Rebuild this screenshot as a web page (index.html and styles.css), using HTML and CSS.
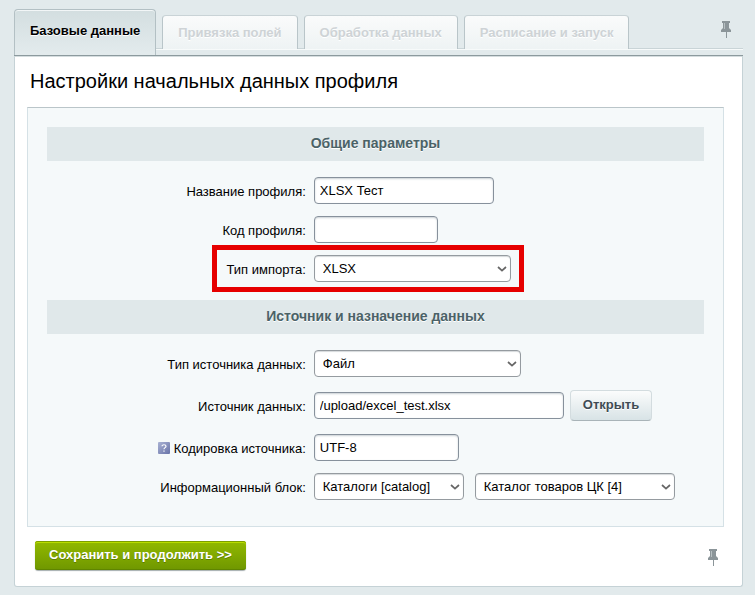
FILE: index.html
```
<!DOCTYPE html>
<html lang="ru">
<head>
  <meta charset="UTF-8" />
  <meta name="viewport" content="width=device-width, initial-scale=1.0"/>
  <title>Настройки начальных данных профиля</title>
  <link rel="stylesheet" href="styles.css">
</head>
<body>
  <div class="tabs">
    <button type="button" class="tab active">Базовые данные</button>
    <button type="button" class="tab" disabled>Привязка полей</button>
    <button type="button" class="tab" disabled>Обработка данных</button>
    <button type="button" class="tab" disabled>Расписание и запуск</button>
    <button type="button" class="pin" aria-label="Закрепить">
      <svg width="10" height="17" viewBox="0 0 10 17">
        <path d="M2 0h7v2H8v5l2 2v2H0V9l2-2V2H1V0z" fill="#8b9599"/>
        <path d="M3 2h1v6H3z" fill="#b7c0c2"/>
        <path d="M5 11h1v6H5z" fill="#8b9599"/>
      </svg>
    </button>
  </div>

  <form class="content">
    <h1>Настройки начальных данных профиля</h1>

    <div class="panel">
      <h2>Общие параметры</h2>
      <div class="rows">
        <div class="row">
          <label for="profileName">Название профиля:</label>
          <div class="field"><input type="text" id="profileName" class="w-name" value="XLSX Тест" /></div>
        </div>
        <div class="row">
          <label for="profileCode">Код профиля:</label>
          <div class="field"><input type="text" id="profileCode" class="w-code" /></div>
        </div>
        <div class="row marked">
          <label for="importType">Тип импорта:</label>
          <div class="field">
            <select id="importType" class="w-type">
              <option>XLSX</option>
            </select>
          </div>
        </div>
      </div>

      <h2>Источник и назначение данных</h2>
      <div class="rows">
        <div class="row">
          <label for="sourceType">Тип источника данных:</label>
          <div class="field">
            <select id="sourceType" class="w-source-type">
              <option>Файл</option>
            </select>
          </div>
        </div>
        <div class="row">
          <label for="source">Источник данных:</label>
          <div class="field">
            <input type="text" id="source" class="w-source" value="/upload/excel_test.xlsx" />
            <button type="button" class="open">Открыть</button>
          </div>
        </div>
        <div class="row">
          <label for="encoding">
            <svg class="hint" width="12" height="12" viewBox="0 0 12 12">
              <defs>
                <linearGradient id="hintFill" x1="0" y1="0" x2="1" y2="1">
                  <stop offset="0" stop-color="#a9b2d3"/>
                  <stop offset="1" stop-color="#6873a8"/>
                </linearGradient>
              </defs>
              <rect width="12" height="12" rx="1" fill="url(#hintFill)"/>
              <path d="M4 4.3C4 2.2 8 2.2 8 4.3 8 5.7 6 5.6 6 7.3M6 8.5v1.2" fill="none" stroke="#fff" stroke-width="1.2"/>
            </svg>
            Кодировка источника:
          </label>
          <div class="field"><input type="text" id="encoding" class="w-encoding" value="UTF-8" /></div>
        </div>
        <div class="row">
          <label for="iblockType">Информационный блок:</label>
          <div class="field pair">
            <select id="iblockType" class="w-iblock-type">
              <option>Каталоги [catalog]</option>
            </select>
            <select id="iblock" class="w-iblock" aria-label="Каталог">
              <option>Каталог товаров ЦК [4]</option>
            </select>
          </div>
        </div>
      </div>
    </div>

    <div class="footer">
      <button type="submit" class="save">Сохранить и продолжить &gt;&gt;</button>
      <button type="button" class="pin" aria-label="Закрепить">
        <svg width="10" height="17" viewBox="0 0 10 17">
          <path d="M2 0h7v2H8v5l2 2v2H0V9l2-2V2H1V0z" fill="#8b9599"/>
          <path d="M3 2h1v6H3z" fill="#b7c0c2"/>
          <path d="M5 11h1v6H5z" fill="#8b9599"/>
        </svg>
      </button>
    </div>
  </form>
</body>
</html>
```
FILE: styles.css
```
*, *::after {
  box-sizing: border-box;
}
body {
  margin: 0;
  padding: 9px 12px 8px 14px;
  background: #e2eaec;
  font-family: "Liberation Sans", Arial, sans-serif;
  font-size: 13px;
  color: #000;
}
button, input, select {
  font-family: inherit;
  font-size: 13px;
  margin: 0;
}
button {
  cursor: pointer;
}

/* tabs */
.tabs {
  display: flex;
  align-items: flex-end;
  gap: 6px;
  height: 47px;
  padding-bottom: 6px;
  border-bottom: 1px solid #8c9a9e;
  background: linear-gradient(#c9d4d7, #c9d4d7) 0 39px / 100% 1px no-repeat,
              linear-gradient(#f7fafa, #f7fafa) 0 40px / 100% 1px no-repeat;
}
.tab {
  height: 34px;
  padding: 0 15px;
  border: 1px solid #b9c5c9;
  border-top-color: #c9d3d6;
  border-bottom: none;
  border-radius: 4px 4px 0 0;
  background: linear-gradient(#fafbfb, #eef3f4);
  color: #ced3d6;
  font-weight: bold;
  text-shadow: 0 1px 0 #fff;
  white-space: nowrap;
}
.tab.active {
  align-self: flex-start;
  flex-shrink: 0;
  height: 46px;
  padding-bottom: 4px;
  border-color: #b3c0c4;
  background: linear-gradient(#d3dee0, #e3ebed);
  box-shadow: inset 0 1px 0 #f2f6f7;
  color: #000;
}
.pin {
  display: flex;
  padding: 0;
  border: none;
  background: none;
}
.tabs .pin {
  margin: 0 12px 11px auto;
}

/* content */
.content {
  padding: 0 18px 16px 12px;
  border: 1px solid #c5d2d6;
  border-top-color: #d5dddf;
  border-radius: 0 0 3px 3px;
  background: #fff;
}
h1 {
  margin: 0;
  padding: 13px 3px 14px;
  font-size: 20px;
  font-weight: normal;
  line-height: 23px;
}
.panel {
  padding: 19px 19px 20px;
  border: 1px solid #d5e1e6;
  border-top-color: #bac5c9;
  background: #f5f9fa;
}
h2 {
  margin: 0;
  padding-bottom: 2px;
  background: #e0e8ea;
  color: #4b6267;
  font-size: 14px;
  line-height: 32px;
  text-align: center;
  text-shadow: 0 1px 0 #fff;
}
.rows {
  padding: 10px 0 12px;
}
.rows:last-child {
  padding-bottom: 0;
}
.row {
  display: grid;
  grid-template-columns: 2fr 3fr;
  align-items: center;
  position: relative;
}
.row label {
  display: flex;
  justify-content: flex-end;
  align-items: center;
  gap: 4px;
  padding: 2px 4px 0 0;
}
.hint {
  margin-bottom: 2px;
}
.field {
  display: flex;
  align-items: center;
  gap: 6px;
  padding: 6px 0 6px 4px;
}
.field.pair {
  gap: 11px;
}
.marked::after {
  content: "";
  position: absolute;
  top: -4px;
  bottom: -4px;
  left: calc(40% - 98px);
  width: 312px;
  border: 5px solid #e60000;
  pointer-events: none;
}
input, select {
  height: 27px;
  border: 1px solid #87919c;
  border-radius: 4px;
  background: #fff;
  color: #000;
}
input {
  padding: 0 5px;
  box-shadow: inset 0 1px 2px #c9d0d4;
}
select {
  appearance: none;
  padding: 0 24px 0 8px;
  border-color: #959ba0;
  background: #fff url("data:image/svg+xml,%3Csvg xmlns='http://www.w3.org/2000/svg' width='10' height='6'%3E%3Cpath d='M1 1l4 3.6L9 1' fill='none' stroke='%23666' stroke-width='1.7'/%3E%3C/svg%3E") no-repeat right 3px center;
  box-shadow: inset 0 1px 1px #d5d9db;
}
.w-name { width: 180px; }
.w-code { width: 124px; }
.w-type { width: 197px; }
.w-source-type { width: 207px; }
.w-source { width: 250px; }
.w-encoding { width: 145px; }
.w-iblock-type { width: 150px; }
.w-iblock { width: 200px; }

.open {
  height: 31px;
  margin: 1px 0;
  padding: 0 12px 2px;
  border: 1px solid #d3dcdf;
  border-bottom-color: #a9b4b8;
  border-radius: 4px;
  background: linear-gradient(#fbfcfc, #d8e3e6);
  color: #3f4b54;
  font-weight: bold;
  text-shadow: 0 1px 0 #fff;
}

/* footer */
.footer {
  display: flex;
  justify-content: space-between;
  align-items: center;
  padding: 14px 6px 0 8px;
}
.footer .pin {
  margin-top: 3px;
}
.save {
  height: 29px;
  padding: 0 14px 2px;
  border: none;
  border-radius: 3px;
  background: linear-gradient(#92b900, #6f9700);
  box-shadow: inset 0 1px 0 #7d9e00, inset 0 2px 0 #b9dc00, inset 0 -1px 0 #5f8500, 0 1px 1px #a5adaf;
  color: #fff;
  font-weight: bold;
  text-shadow: 0 1px 0 #5c7d00;
}
```
